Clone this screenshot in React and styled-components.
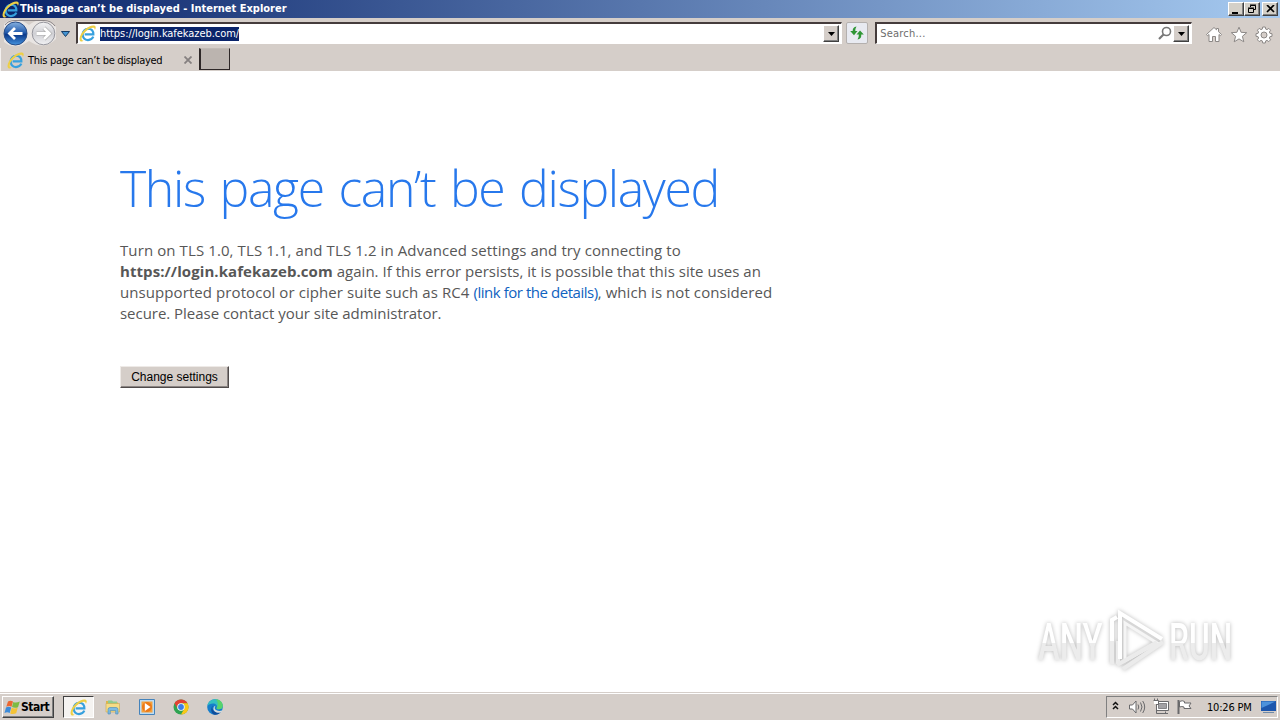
import React from 'react';
import styled, { createGlobalStyle } from 'styled-components';

const GlobalStyle = createGlobalStyle`
  * {
    box-sizing: border-box;
  }

  body {
    margin: 0;
    overflow: hidden;
    background: #fff;
  }
`;

const ui = "'DejaVu Sans Condensed', 'DejaVu Sans', sans-serif";

const Screen = styled.div`
  display: flex;
  flex-direction: column;
  width: 1280px;
  height: 720px;
  font-family: ${ui};
  font-size: 11px;
  color: #000;
  white-space: nowrap;

  svg {
    display: block;
    flex: none;
  }
`;

const TitleBar = styled.header`
  display: flex;
  align-items: center;
  height: 18px;
  padding: 0 2px;
  background: linear-gradient(90deg, #0a246a 0%, #a6caf0 100%);
`;

const Title = styled.span`
  flex: 1;
  margin-left: 1px;
  font-weight: 700;
  line-height: 18px;
  color: #fff;
`;

const WindowButton = styled.button`
  display: flex;
  align-items: center;
  justify-content: center;
  width: 16px;
  height: 14px;
  margin-left: ${props => props.$gap || 0};
  padding: 0;
  border: 1px solid;
  border-color: #fff #404040 #404040 #fff;
  background: #d4d0c8;
  box-shadow: inset -1px -1px #808080;
`;

const Toolbar = styled.div`
  display: flex;
  align-items: center;
  height: 30px;
  padding: 0 7px 0 2px;
  background: #d5cec9;
`;

const HistoryButtons = styled.div`
  width: 74px;
  height: 30px;
`;

const Field = styled.div`
  display: flex;
  align-items: center;
  width: ${props => props.$width};
  height: 22px;
  margin-left: ${props => props.$gap || 0};
  padding: 0 2px 0 1px;
  border: solid;
  border-width: 2px 1px 1px 2px;
  border-color: #453c3c #fff #fff #453c3c;
  background: #fff;
`;

const Address = styled.span`
  height: 14px;
  margin-left: 4px;
  line-height: 14px;
  letter-spacing: -0.06px;
  background: #0a246a;
  color: #fff;
`;

const Placeholder = styled.span`
  margin-left: 2px;
  letter-spacing: 0.2px;
  color: #6d6d6d;
`;

const Spacer = styled.div`
  flex: 1;
`;

const DropButton = styled(WindowButton)`
  height: 17px;
  background: #d5cec9;
`;

const RefreshButton = styled.button`
  display: flex;
  align-items: center;
  justify-content: center;
  width: 22px;
  height: 22px;
  margin-left: 4px;
  padding: 0;
  border: 1px solid #b4b0ae;
  border-radius: 2px;
  background: #e8eaf1;
`;

const Commands = styled.div`
  display: flex;
  gap: 7px;
  margin: 4px 0 0 13px;
`;

const TabRow = styled.div`
  display: flex;
  height: 23px;
  background: #d5cec9;
`;

const Tab = styled.div`
  display: flex;
  align-items: center;
  width: 198px;
  padding: 1px 6px 0 6px;
  border-left: 1px solid #f4f1ef;
`;

const TabLabel = styled.span`
  flex: 1;
  margin-left: 4px;
  letter-spacing: -0.28px;
`;

const NewTab = styled.button`
  width: 31px;
  height: 22px;
  margin-left: 1px;
  padding: 0;
  border: solid #2d2727;
  border-width: 1px 1px 1px 2px;
  border-top-color: #c2bbb6;
  background: #bbb4af;
`;

const Page = styled.main`
  position: relative;
  flex: 1;
  padding: 84px 0 0 120px;
  background: #fff;
`;

const Heading = styled.h1`
  margin: 0;
  font-family: 'Open Sans', sans-serif;
  font-size: 50px;
  font-weight: 300;
  line-height: 66px;
  letter-spacing: -1.36px;
  word-spacing: 3px;
  color: #2778ec;
`;

const Message = styled.p`
  margin: 19px 0 0;
  font-family: 'Open Sans', sans-serif;
  font-size: 15px;
  line-height: 21px;
  color: #575757;
`;

const Line = styled.span`
  display: block;
  letter-spacing: ${props => props.$spacing || 0};
`;

const Host = styled.b`
  letter-spacing: 0.08px;
`;

const Link = styled.a`
  letter-spacing: -0.46px;
  color: #0f62c0;
`;

const SettingsButton = styled.button`
  width: 109px;
  height: 22px;
  margin-top: 42px;
  padding: 0;
  border: 1px solid;
  border-color: #eeeae7 #504b4b #504b4b #eeeae7;
  background: #d5cec9;
  box-shadow: inset -1px -1px #8b8583;
  font-family: 'Liberation Sans', sans-serif;
  font-size: 12px;
  line-height: 18px;
  color: #000;
`;

const Watermark = styled.div`
  position: absolute;
  left: 1038px;
  top: 538px;
  display: flex;
  align-items: center;
  height: 64px;
  filter: drop-shadow(0 0 2px rgba(0, 0, 0, 0.28));
`;

const WatermarkWord = styled.div`
  width: ${props => props.$width};
  padding-top: 4px;

  span {
    display: inline-block;
    font-family: 'Roboto', sans-serif;
    font-size: 52px;
    font-weight: 500;
    line-height: 60px;
    transform: scaleX(${props => props.$scale});
    transform-origin: 0 50%;
    background: linear-gradient(#fff 50%, #ececec 50%);
    background-clip: text;
    color: transparent;
  }
`;

const Taskbar = styled.footer`
  display: flex;
  align-items: center;
  height: 28px;
  padding: 1px 2px 0;
  border-top: 1px solid #d5cec9;
  background: #d5cec9;
  box-shadow: inset 0 1px #fff;
`;

const StartButton = styled.button`
  display: flex;
  align-items: center;
  width: 52px;
  height: 22px;
  padding: 0 0 0 1px;
  border: 1px solid;
  border-color: #fff #404040 #404040 #fff;
  background: #d5cec9;
  box-shadow: inset -1px -1px #808080;
  font-family: ${ui};
  font-size: 12px;
  font-weight: 700;
  letter-spacing: -0.5px;
  color: #000;
`;

const ActiveTask = styled.div`
  display: flex;
  align-items: center;
  justify-content: center;
  width: 31px;
  height: 22px;
  margin: 0 10px 0 9px;
  border: 1px solid;
  border-color: #404040 #fff #fff #404040;
  background: #f5f3f1;
`;

const Pinned = styled.div`
  display: flex;
  gap: 16px;
`;

const Tray = styled.div`
  display: flex;
  align-items: center;
  width: 172px;
  height: 22px;
  padding-left: 5px;
  border: 1px solid;
  border-color: #808080 #fff #fff #808080;
`;

const Clock = styled.time`
  width: 46px;
  margin: 0 7px 0 11px;
  letter-spacing: -0.2px;
`;

const IeIcon = ({ size = 17 }) =>
  (<svg width={size} height={size} viewBox="0 0 18 18" fill="none">
    <path
      d="M15.200 12.300Q13.500 16 9.500 16 4 15.500 3.900 10 4.300 4.500 9.700 4 15.300 4.300 15.200 9.900H6"
      stroke="#36a0de"
      strokeWidth="2.300"
    />
    <path
      d="M3.200 17.600C-1.700 17.600.8 9.500 6.200 4.700S17.700-.6 17.700 2.600c0 1-.4 1.900-.9 2.600C16.900 1.500 12 2.500 7.500 6.500S.8 16 5 16.600z"
      fill="#edcf45"
    />
  </svg>);

const DropArrow = () =>
  (<svg width="7" height="4" viewBox="0 0 7 4">
    <path d="M0 0h7L3.500 4z" fill="#000" />
  </svg>);

const History = () =>
  (<svg width="74" height="30" viewBox="2 18 74 30">
    <defs>
      <linearGradient id="back" x2="0" y2="1">
        <stop stopColor="#86b1e0" />
        <stop offset=".45" stopColor="#255dae" />
        <stop offset=".55" stopColor="#0b398b" />
        <stop offset="1" stopColor="#4694df" />
      </linearGradient>
      <linearGradient id="forward" x2="0" y2="1">
        <stop stopColor="#f4f4f5" />
        <stop offset=".5" stopColor="#cfcfd4" />
        <stop offset="1" stopColor="#f1f1f3" />
      </linearGradient>
    </defs>
    <path d="M4 24Q15 14 29 25Q43 14 56 27V39Q44 51 29 41Q15 51 4 42z" fill="#e9e5e3" />
    <path d="M5 25Q8 20.500 15 20.500H44Q51 20.500 55 26" fill="none" stroke="#8d8789" />
    <circle cx="15.500" cy="33.500" r="11.500" fill="url(#back)" stroke="#284d87" />
    <path d="M22.500 33.500H10M15 28 9.500 33.500l5.500 5.500" fill="none" stroke="#fff" strokeWidth="2.800" />
    <circle cx="43.500" cy="33.500" r="11.300" fill="url(#forward)" stroke="#97979e" />
    <path d="M36.500 33.500H49M44 28l5.500 5.500-5.500 5.500" fill="none" stroke="#aaa" strokeWidth="4" />
    <path d="M36.500 33.500H49M44 28l5.500 5.500-5.500 5.500" fill="none" stroke="#fff" strokeWidth="2.800" />
    <path d="M61.500 31.500h8l-4 5z" fill="#4494d2" stroke="#163d66" />
  </svg>);

const Refresh = () =>
  (<svg width="16" height="16" viewBox="0 0 16 16" fill="#2f9635">
    <path d="M7.500 1.500Q3.500 2 3.700 6H1.200L5 10.200 8.500 6H6.300Q6 4 7.500 1.500z" />
    <path d="M8.500 14.500q4-.5 3.800-5h2.500L11 5.500 7.500 9.500h2.300q.3 2.500-1.300 5z" />
  </svg>);

const Magnifier = () =>
  (<svg width="14" height="15" viewBox="0 0 14 15" fill="none" stroke="#777">
    <circle cx="8.500" cy="5.500" r="4" strokeWidth="1.600" />
    <path d="M5.500 8.500 1 13" strokeWidth="2.200" />
  </svg>);

const commandPaths = [
  'M1.500 8.500 9 1.500l2.500 2.300V2.500h2v3.200l3 2.800-1 1.200-1.500-1.200v7h-3.500v-5h-3v5H4v-7L2.500 9.700z',
  'M9 1.200l2.100 5.100 5.600.4-4.300 3.600 1.400 5.500L9 12.900l-4.800 2.900 1.400-5.500-4.300-3.600 5.600-.4z',
  'M7.700 1h2.600l.4 2.100 1.300.5 1.800-1.200 1.800 1.800-1.200 1.800.5 1.300 2.100.4v2.600l-2.100.4-.5 1.300 1.200 1.800-1.800 1.800-1.800-1.200-1.300.5-.4 2.100H7.700l-.4-2.100-1.300-.5-1.800 1.200-1.800-1.800L3.600 12l-.5-1.300L1 10.300V7.700l2.100-.4L3.600 6 2.400 4.200l1.800-1.800L6 3.600l1.300-.5zM9 6a3 3 0 1 0 0 6 3 3 0 0 0 0-6z',
];

const StartFlag = () =>
  (<svg width="17" height="17" viewBox="0 0 17 17">
    <path d="M4 2.500Q6.500.8 9 2.600L7.500 7.700Q5 6.300 2.300 7.800z" fill="#ec6730" />
    <path d="M9.300 3q2.700 1.400 6.500-.5L14 8.200q-3.200 1.300-6-.2z" fill="#7dbb42" />
    <path d="M2 8.500q2.700-1.500 5.200 0L5.700 14Q3.200 12.500.5 14z" fill="#3c8bd9" />
    <path d="M7.700 8.700q2.700 1.400 6 0l-1.500 5.500q-3.200 1.500-6 .2z" fill="#f4c336" />
  </svg>);

const Folder = () =>
  (<svg width="18" height="18" viewBox="0 0 18 18">
    <path d="M2 3h5l1 1.500h6V8H2z" fill="#dcb64c" />
    <path d="M4 2.500h4l1 1h4v3H4z" fill="#8fcb8f" />
    <path d="M2 5.500h13.500V14H2z" fill="#f6dc86" stroke="#c9a750" strokeWidth=".6" />
    <path d="M4 16V11.500q0-2 2-2h6q2 0 2 2V16h-2.300v-3.500H6.300V16z" fill="#7dbbe3" stroke="#4689b7" strokeWidth=".6" />
  </svg>);

const MediaPlayer = () =>
  (<svg width="18" height="18" viewBox="0 0 18 18">
    <path d="M1.500 1.500h15v15h-15z" fill="#bddcf2" stroke="#4583bb" />
    <path d="M3.500 3.500h11v11h-11z" fill="#f5a13c" />
    <circle cx="9" cy="9" r="5" fill="#ec7a17" />
    <path d="M6.800 5v8L12.500 9z" fill="#fff" />
  </svg>);

const Chrome = () =>
  (<svg width="18" height="18" viewBox="0 0 18 18">
    <circle cx="9" cy="9" r="7.500" fill="#2fa351" />
    <path d="M2.500 5.200a7.500 7.500 0 0 1 13 0H9A3.800 3.800 0 0 0 5.700 11z" fill="#e34133" />
    <path d="M15.500 5.200A7.500 7.500 0 0 1 9 16.500l3.300-5.700A3.800 3.800 0 0 0 9 5.200z" fill="#fbc816" />
    <circle cx="9" cy="9" r="3.800" fill="#fff" />
    <circle cx="9" cy="9" r="2.900" fill="#3c7ee8" />
  </svg>);

const Edge = () =>
  (<svg width="18" height="18" viewBox="0 0 18 18">
    <circle cx="9" cy="9" r="7.800" fill="#167ecb" />
    <path d="M1.400 8C2 3.500 5.500 1.200 9 1.200c5 0 7.800 3.600 7.800 6.500 0 2.300-1.700 3.600-3.800 3.600-1.700 0-2.700-.8-2.400-1.400C12 7.500 9.500 5.600 7 5.600 4.500 5.600 2.300 6.700 1.400 8z" fill="#35bfc0" />
    <path d="M10 1.300c4.500.2 6.800 3.600 6.800 6.400 0 2.300-1.700 3.600-3.800 3.600-1.700 0-2.700-.8-2.400-1.400C13 7 11.500 3.500 10 1.300z" fill="#58d36c" />
    <path d="M7 7.500c-2 3 .5 7.500 6 6.500q1.500-.2 2.500-1-2.500 3.900-6.500 3.800C5 16.500 4 10 7 7.500z" fill="#104e9c" />
    <path d="M9.500 7.800q-2 3 1 4.500 2 1 6 .3l-1 1.600q-2.500 1-5 .2C6.800 13 6.500 9 9.500 7.800z" fill="#d9dcdb" />
  </svg>);

const TrayIcons = () =>
  (<svg width="84" height="20" viewBox="0 0 84 20" fill="none" stroke="#69696b">
    <path d="M1 8l2.500-2.500L6 8M1 12l2.500-2.500L6 12" stroke="#111" strokeWidth="1.500" />
    <path d="M17.500 8h3l3.500-4v12l-3.500-4h-3z" fill="#fff" />
    <path d="M26 7.500q1.500 2.500 0 5M28.500 5.500q3 4.500 0 9M30.700 4q4 6 0 12" />
    <path d="M44.500 4.500h12v9h-12z" fill="#fff" />
    <path d="M46.500 6.500h8v5h-8z" fill="#a3a2a5" stroke="#858588" />
    <path d="M41.500 3.500h5v4h-2v9h9v-2M42.500 1.500v2M45.500 1.500v2M48 16.500h8" fill="none" />
    <path d="M42 4h4v3h-4z" fill="#fff" stroke="none" />
    <path d="M66.500 3v14" strokeWidth="2" />
    <path d="M67.500 4.500q3-1.500 5 0v1.500h6.500l-2 3 2 2.500h-7V10q-2-1-4.500 0z" fill="#fff" />
  </svg>);

const Desktop = () =>
  (<svg width="17" height="16" viewBox="0 0 17 16">
    <path d="M1 2h15v10H1z" fill="#1c56ad" />
    <path d="M1.500 2.500h14L1.500 9z" fill="#4c91db" />
    <path d="M3 13h11v1H3z" fill="#6f8aa8" />
  </svg>);

const WatermarkLogo = () =>
  (<svg width="64" height="64" viewBox="-2 0 64 64" fill="none">
    <path d="M5 30v25M11 32v23" stroke="#ececec" strokeWidth="4" />
    <path d="M5 32V11l5-3M13 50V4l42 26" stroke="#fff" strokeWidth="4" />
    <path d="M18 14l32 20-32 18z" stroke="#f5f5f5" strokeWidth="3" />
    <path d="M56 33 16 60M50 33 10 56" stroke="#ebebeb" strokeWidth="4" />
  </svg>);

export default () =>
  (<Screen>
    <GlobalStyle />
    <TitleBar>
      <IeIcon size={17} />
      <Title>This page can’t be displayed - Internet Explorer</Title>
      <WindowButton>
        <svg width="10" height="9"><path d="M1 7h6v2H1z" /></svg>
      </WindowButton>
      <WindowButton>
        <svg width="10" height="10" fill="none" stroke="#000">
          <path d="M3.500 3V1.500h5v4H7M3 1h6M1.500 4.500h5v4h-5zM1 4h6" />
        </svg>
      </WindowButton>
      <WindowButton $gap="2px">
        <svg width="9" height="8"><path d="M1 0l7 7M8 0L1 7" stroke="#000" strokeWidth="1.700" /></svg>
      </WindowButton>
    </TitleBar>
    <Toolbar>
      <HistoryButtons><History /></HistoryButtons>
      <Field $width="767px">
        <IeIcon />
        <Address>https://login.kafekazeb.com/</Address>
        <Spacer />
        <DropButton><DropArrow /></DropButton>
      </Field>
      <RefreshButton><Refresh /></RefreshButton>
      <Field $width="317px" $gap="7px">
        <Placeholder>Search...</Placeholder>
        <Spacer />
        <Magnifier />
        <DropButton $gap="1px"><DropArrow /></DropButton>
      </Field>
      <Commands>
        {commandPaths.map(path =>
          (<svg key={path} width="18" height="18" viewBox="0 0 18 18">
            <path d={path} fill="#fff" stroke="#8c8886" fillRule="evenodd" />
          </svg>)
        )}
      </Commands>
    </Toolbar>
    <TabRow>
      <Tab>
        <IeIcon />
        <TabLabel>This page can’t be displayed</TabLabel>
        <svg width="8" height="8"><path d="M.5.500l7 7M7.500.500l-7 7" stroke="#858080" strokeWidth="1.800" /></svg>
      </Tab>
      <NewTab />
    </TabRow>
    <Page>
      <Heading>This page can’t be displayed</Heading>
      <Message>
        <Line $spacing="0.1px">Turn on TLS 1.0, TLS 1.1, and TLS 1.2 in Advanced settings and try connecting to</Line>
        <Line $spacing="0.02px"><Host>https://login.kafekazeb.com</Host> again. If this error persists, it is possible that this site uses an</Line>
        <Line $spacing="0.08px">unsupported protocol or cipher suite such as RC4 <Link>(link for the details)</Link>, which is not considered</Line>
        <Line $spacing="-0.03px">secure. Please contact your site administrator.</Line>
      </Message>
      <SettingsButton>Change settings</SettingsButton>
      <Watermark>
        <WatermarkWord $width="67px" $scale={0.63}><span>ANY</span></WatermarkWord>
        <WatermarkLogo />
        <WatermarkWord $width="66px" $scale={0.61}><span>RUN</span></WatermarkWord>
      </Watermark>
    </Page>
    <Taskbar>
      <StartButton><StartFlag />Start</StartButton>
      <ActiveTask><IeIcon /></ActiveTask>
      <Pinned>
        <Folder />
        <MediaPlayer />
        <Chrome />
        <Edge />
      </Pinned>
      <Spacer />
      <Tray>
        <TrayIcons />
        <Clock>10:26 PM</Clock>
        <Desktop />
      </Tray>
    </Taskbar>
  </Screen>);
